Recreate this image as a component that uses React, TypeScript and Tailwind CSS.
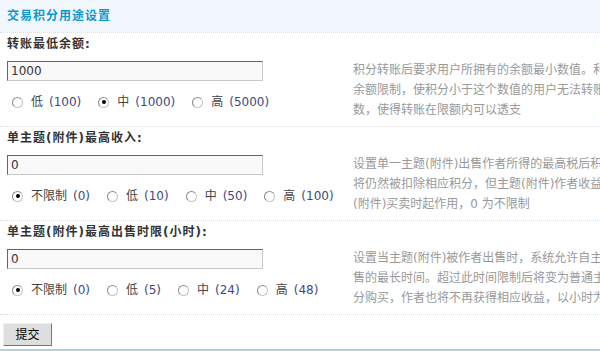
import React from 'react';

type Opt = { label: string; value: string; checked?: boolean };

const sections: { title: string; value: string; options: Opt[]; desc: string[] }[] = [
  {
    title: '转账最低余额:',
    value: '1000',
    options: [
      { label: '低', value: '(100)' },
      { label: '中', value: '(1000)', checked: true },
      { label: '高', value: '(5000)' },
    ],
    desc: [
      '积分转账后要求用户所拥有的余额最小数值。利用此功能，您可以设置较大的',
      '余额限制，使积分小于这个数值的用户无法转账；也可以将余额限制设置为负',
      '数，使得转账在限额内可以透支',
    ],
  },
  {
    title: '单主题(附件)最高收入:',
    value: '0',
    options: [
      { label: '不限制', value: '(0)', checked: true },
      { label: '低', value: '(10)' },
      { label: '中', value: '(50)' },
      { label: '高', value: '(100)' },
    ],
    desc: [
      '设置单一主题(附件)出售作者所得的最高税后积分数，超过此数值后，购买者',
      '将仍然被扣除相应积分，但主题(附件)作者收益将不再上升。本设置只在主题',
      '(附件)买卖时起作用，0 为不限制',
    ],
  },
  {
    title: '单主题(附件)最高出售时限(小时):',
    value: '0',
    options: [
      { label: '不限制', value: '(0)', checked: true },
      { label: '低', value: '(5)' },
      { label: '中', value: '(24)' },
      { label: '高', value: '(48)' },
    ],
    desc: [
      '设置当主题(附件)被作者出售时，系统允许自主题(附件)发布时间开始的可以被出',
      '售的最长时间。超过此时间限制后将变为普通主题(附件)，阅读者无需支付积',
      '分购买，作者也将不再获得相应收益，以小时为单位，0 为不限制',
    ],
  },
];

function Radio({ checked }: { checked?: boolean }) {
  return (
    <span className="ml-[5px] mr-[8px] flex h-[11px] w-[11px] shrink-0 items-center justify-center rounded-full border border-[#c4c4c4] border-l-[#8a8a8a] border-t-[#8a8a8a] bg-white">
      {checked && <span className="h-[4px] w-[4px] rounded-full bg-black" />}
    </span>
  );
}

export default function App() {
  return (
    <div
      className="h-[351px] w-[600px] overflow-hidden bg-white text-[12px] text-[#333]"
      style={{ fontFamily: '"DejaVu Sans", "Noto Sans CJK SC", sans-serif' }}
    >
      <div className="flex h-[32px] items-center bg-[#f1f7fd] pl-[7px] text-[12px] font-bold tracking-[1px] text-[#0a97d0]">
        交易积分用途设置
      </div>

      {sections.map((s) => (
        <div key={s.title} className="border-t border-dotted border-[#cde2f0]">
          <div className="h-[23px] pl-[7px] font-bold leading-[23px] tracking-[1px] text-[#333]">{s.title}</div>
          <div className="flex h-[70px]">
            <div className="w-[346px] shrink-0 pl-[7px] pt-[5px]">
              <input
                readOnly
                value={s.value}
                className="block h-[20px] w-[256px] border border-b-[#c8c8c8] border-l-[#666] border-r-[#c8c8c8] border-t-[#666] bg-[#f9f9f9] px-[3px] text-[12px] leading-[18px] text-[#333] outline-none"
              />
              <div className="mt-[10px] flex h-[22px] items-center gap-[12px] text-[#444]">
                {s.options.map((o) => (
                  <div key={o.label} className="flex items-center whitespace-nowrap">
                    <Radio checked={o.checked} />
                    <span>{o.label}</span>
                    <span className="ml-[6px] text-[#3d4a80]">{o.value}</span>
                  </div>
                ))}
              </div>
            </div>
            <div className="w-[460px] shrink-0 pl-[7px] pt-[4px] text-[12px] leading-[20px] text-[#999]">
              {s.desc.map((line) => (
                <div key={line} className="whitespace-nowrap">
                  {line}
                </div>
              ))}
            </div>
          </div>
        </div>
      ))}

      <div className="h-[35px] border-t border-dotted border-[#cde2f0] pl-[3px] pt-[8px]">
        <button className="h-[23px] w-[49px] border border-b-[#7a7a7a] border-l-[#eee] border-r-[#7a7a7a] border-t-[#eee] bg-[#dedede] text-[12px] text-black">
          提交
        </button>
      </div>
      <div className="border-t-2 border-[#b4d0da]" />
    </div>
  );
}
